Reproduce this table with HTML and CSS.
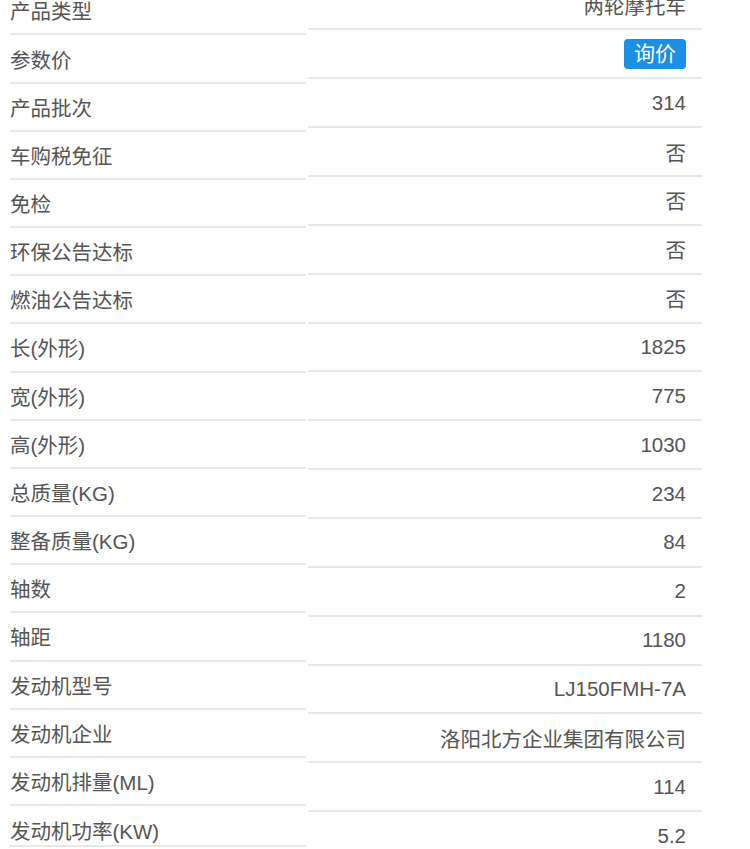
FILE: index.html
```html
<!DOCTYPE html>
<html lang="zh-CN">
<head>
    <meta charset="UTF-8">
    <meta name="viewport" content="width=device-width, initial-scale=1.0">
    <title>产品参数</title>
    <link rel="stylesheet" href="styles.css">
</head>
<body>
    <div class="spec-table">
        <ul class="spec-names">
            <li>产品类型</li>
            <li>参数价</li>
            <li>产品批次</li>
            <li>车购税免征</li>
            <li>免检</li>
            <li>环保公告达标</li>
            <li>燃油公告达标</li>
            <li>长(外形)</li>
            <li>宽(外形)</li>
            <li>高(外形)</li>
            <li>总质量(KG)</li>
            <li>整备质量(KG)</li>
            <li>轴数</li>
            <li>轴距</li>
            <li>发动机型号</li>
            <li>发动机企业</li>
            <li>发动机排量(ML)</li>
            <li>发动机功率(KW)</li>
        </ul>
        <ul class="spec-values">
            <li>两轮摩托车</li>
            <li><span class="ask-price">询价</span></li>
            <li>314</li>
            <li>否</li>
            <li>否</li>
            <li>否</li>
            <li>否</li>
            <li>1825</li>
            <li>775</li>
            <li>1030</li>
            <li>234</li>
            <li>84</li>
            <li>2</li>
            <li>1180</li>
            <li>LJ150FMH-7A</li>
            <li>洛阳北方企业集团有限公司</li>
            <li>114</li>
            <li>5.2</li>
        </ul>
    </div>
</body>
</html>
```

FILE: styles.css
```css
html, body {
    height: 100%;
}
body {
    margin: 0;
    overflow: hidden;
    background-color: #fff;
    font-family: "Liberation Sans", Arial, "Noto Sans CJK SC", sans-serif;
    font-size: 20.5px;
    color: #555;
}
.spec-table {
    display: flex;
    align-items: flex-start;
    padding-left: 10px;
}
.spec-names, .spec-values {
    list-style: none;
    margin: 0;
    padding: 0;
}
.spec-names {
    width: 296px;
    margin-top: -12.7px;
}
.spec-values {
    width: 394px;
    margin-left: 2px;
    margin-top: -18.5px;
}
.spec-names li, .spec-values li {
    box-sizing: border-box;
    display: flex;
    align-items: center;
    border-bottom: 2px solid #e8e8e8;
    white-space: nowrap;
}
.spec-names li {
    height: 48.17px;
}
.spec-names li:last-child {
    height: 41px;
    padding-top: 9.6px;
}
.spec-values li {
    height: 48.86px;
    justify-content: flex-end;
    padding-right: 16px;
}
.ask-price {
    display: inline-block;
    height: 30px;
    line-height: 30px;
    padding: 0 10px;
    border-radius: 4px;
    background-color: #1a8fe3;
    color: #fff;
    font-size: 21px;
}
```
